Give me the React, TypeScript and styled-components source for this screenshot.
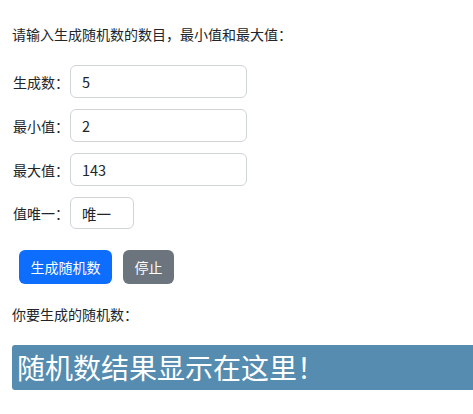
import React from "react";
import styled, { createGlobalStyle } from "styled-components";

const Global = createGlobalStyle`
  html, body { margin: 0; padding: 0; background: #fff; }
  body {
    font-family: "Noto Sans CJK SC", "Noto Sans", sans-serif;
    color: #212529;
    overflow: hidden;
  }
  * { box-sizing: border-box; }
`;

const Page = styled.div`
  padding: 24px 0 0 12px;
  display: flex;
  flex-direction: column;
`;

const Note = styled.p`
  margin: 0;
  font-size: 14px;
  line-height: 20px;
  height: 20px;
`;

const Form = styled.div`
  margin-top: 21px;
  display: flex;
  flex-direction: column;
  gap: 11px;
`;

const Row = styled.div`
  display: flex;
  align-items: center;
`;

const Label = styled.label`
  width: 58px;
  padding-left: 1px;
  font-size: 14px;
  line-height: 20px;
  white-space: nowrap;
`;

const Field = styled.input<{ $w: number; $h: number }>`
  width: ${(p) => p.$w}px;
  height: ${(p) => p.$h}px;
  border: 1px solid #ced4da;
  border-radius: 6px;
  padding: 0 11px;
  font-family: "Noto Sans CJK SC", "Noto Sans", sans-serif;
  font-size: 14.5px;
  color: #212529;
  background: #fff;
  outline: none;
`;

const Actions = styled.div`
  margin: 21px 0 0 7px;
  display: flex;
  gap: 11px;
`;

const Button = styled.button<{ $tone: "primary" | "secondary" }>`
  height: 34px;
  padding: 0 11.5px;
  border: none;
  border-radius: 6px;
  background: ${(p) => (p.$tone === "primary" ? "#0d6efd" : "#6c757d")};
  color: #fff;
  font-family: "Noto Sans CJK SC", "Noto Sans", sans-serif;
  font-size: 14px;
  line-height: 34px;
  cursor: pointer;
`;

const Caption = styled.p`
  margin: 20px 0 0;
  font-size: 14px;
  line-height: 20px;
`;

const Result = styled.div`
  margin-top: 21px;
  height: 45px;
  background: #558cb0;
  border-radius: 3px 0 0 3px;
  color: #fff;
  font-size: 28px;
  line-height: 45px;
  padding-left: 5px;
  white-space: nowrap;
`;

export default function App() {
  return (
    <>
      <Global />
      <Page>
        <Note>请输入生成随机数的数目，最小值和最大值：</Note>
        <Form>
          <Row>
            <Label>生成数：</Label>
            <Field $w={177} $h={33} defaultValue="5" />
          </Row>
          <Row>
            <Label>最小值：</Label>
            <Field $w={177} $h={33} defaultValue="2" />
          </Row>
          <Row>
            <Label>最大值：</Label>
            <Field $w={177} $h={33} defaultValue="143" />
          </Row>
          <Row>
            <Label>值唯一：</Label>
            <Field $w={64} $h={32} defaultValue="唯一" />
          </Row>
        </Form>
        <Actions>
          <Button $tone="primary">生成随机数</Button>
          <Button $tone="secondary">停止</Button>
        </Actions>
        <Caption>你要生成的随机数：</Caption>
        <Result>随机数结果显示在这里！</Result>
      </Page>
    </>
  );
}
